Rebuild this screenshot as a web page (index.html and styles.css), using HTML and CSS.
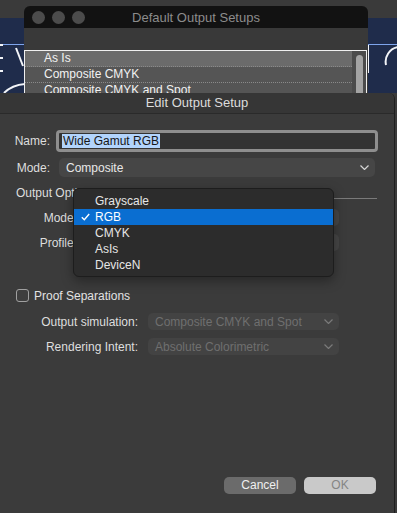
FILE: index.html
```html
<!DOCTYPE html>
<html>
<head>
<meta charset="utf-8">
<link rel="stylesheet" href="styles.css">
</head>
<body>
<div class="desk">
  <div class="wallpaper">
    <svg width="397" height="75" viewBox="0 0 397 75">
      <rect width="397" height="75" fill="#1f2c4b"/>
      <line x1="0" y1="26.5" x2="397" y2="26.5" stroke="#7ea5ec" stroke-width="1"/>
      <g stroke="#f2f4f8" stroke-width="2" fill="none">
        <line x1="0" y1="27" x2="3" y2="27"/>
        <line x1="0" y1="40" x2="3" y2="40"/>
        <line x1="0" y1="53" x2="3" y2="53"/>
        <line x1="16" y1="30" x2="23" y2="48"/>
        <path d="M4 75 Q12 67 25 66"/>
        <line x1="368" y1="27" x2="368" y2="55"/>
        <path d="M398 29 A15 15 0 0 0 386 47"/>
      </g>
    </svg>
  </div>

  <div class="back-window">
    <div class="bw-title">
      <div class="lights"><span></span><span></span><span></span></div>
      <div class="bw-title-text">Default Output Setups</div>
    </div>
    <div class="bw-toolbar"></div>
    <div class="bw-list">
      <div class="rows">
        <div class="row sel">As Is</div>
        <div class="row">Composite CMYK</div>
        <div class="row">Composite CMYK and Spot</div>
      </div>
      <div class="scroll"><div class="thumb"></div></div>
    </div>
  </div>

  <div class="dialog">
    <div class="d-title">Edit Output Setup</div>
    <div class="d-body">
      <div class="field name-row">
        <label>Name:</label>
        <div class="input"><span class="sel-text">Wide Gamut RGB</span></div>
      </div>
      <div class="field mode-row">
        <label>Mode:</label>
        <div class="popup"><span>Composite</span>
          <svg class="chev" width="9" height="5" viewBox="0 0 9 5"><path d="M0.5 0.5 L4.5 4.5 L8.5 0.5" fill="none" stroke="#d6d6d6" stroke-width="1.2"/></svg>
        </div>
      </div>
      <div class="group-head"><span>Output Options</span><div class="rule"></div></div>
      <div class="field sub first">
        <label>Mode:</label>
        <div class="popup"><span></span>
          <svg class="chev" width="9" height="5" viewBox="0 0 9 5"><path d="M0.5 0.5 L4.5 4.5 L8.5 0.5" fill="none" stroke="#d6d6d6" stroke-width="1.2"/></svg>
        </div>
      </div>
      <div class="field sub">
        <label>Profile:</label>
        <div class="popup"><span></span>
          <svg class="chev" width="9" height="5" viewBox="0 0 9 5"><path d="M0.5 0.5 L4.5 4.5 L8.5 0.5" fill="none" stroke="#d6d6d6" stroke-width="1.2"/></svg>
        </div>
      </div>
      <div class="check-row"><span class="checkbox"></span><span>Proof Separations</span></div>
      <div class="field sim first">
        <label>Output simulation:</label>
        <div class="popup disabled"><span>Composite CMYK and Spot</span>
          <svg class="chev" width="9" height="5" viewBox="0 0 9 5"><path d="M0.5 0.5 L4.5 4.5 L8.5 0.5" fill="none" stroke="#7a7a7a" stroke-width="1.2"/></svg>
        </div>
      </div>
      <div class="field sim">
        <label>Rendering Intent:</label>
        <div class="popup disabled"><span>Absolute Colorimetric</span>
          <svg class="chev" width="9" height="5" viewBox="0 0 9 5"><path d="M0.5 0.5 L4.5 4.5 L8.5 0.5" fill="none" stroke="#7a7a7a" stroke-width="1.2"/></svg>
        </div>
      </div>
      <div class="buttons">
        <div class="btn cancel">Cancel</div>
        <div class="btn ok">OK</div>
      </div>
    </div>

    <div class="menu">
      <div class="item">Grayscale</div>
      <div class="item active">
        <svg class="check" width="9" height="8" viewBox="0 0 9 8"><path d="M0.8 4.2 L3.3 6.7 L8.2 1" fill="none" stroke="#ffffff" stroke-width="1.4"/></svg>RGB</div>
      <div class="item">CMYK</div>
      <div class="item">AsIs</div>
      <div class="item">DeviceN</div>
    </div>
  </div>
</div>
</body>
</html>
```

FILE: styles.css
```css
* { box-sizing: border-box; }
html, body {
  margin: 0;
  padding: 0;
}
body {
  width: 397px;
  height: 513px;
  overflow: hidden;
  background: #2c3531;
  font-family: "Liberation Sans", Arial, sans-serif;
  font-size: 12px;
  color: #dedede;
}
.desk {
  position: relative;
  width: 397px;
  height: 513px;
  background: #3a3a3a;
}
.wallpaper {
  position: absolute;
  left: 0;
  top: 18px;
  width: 397px;
  height: 75px;
}
.wallpaper svg { display: block; }

/* back window */
.back-window {
  position: absolute;
  left: 24px;
  top: 6px;
  width: 344px;
  height: 100px;
  background: #393939;
  border-radius: 6px 6px 0 0;
  overflow: hidden;
  display: flex;
  flex-direction: column;
}
.bw-title {
  position: relative;
  flex: none;
  height: 22px;
  background: #121212;
  display: flex;
  align-items: center;
  justify-content: center;
}
.lights {
  position: absolute;
  left: 8px;
  top: 5px;
  display: flex;
  gap: 7px;
}
.lights span {
  width: 13px;
  height: 13px;
  border-radius: 50%;
  background: #4c4c4c;
}
.bw-title-text {
  font-size: 13px;
  color: #8c8c8c;
}
.bw-toolbar {
  flex: none;
  height: 22px;
}
.bw-list {
  flex: 1;
  display: flex;
  border: 1px solid #f0f0f0;
  border-bottom: none;
  margin-right: 1px;
  background: #555555;
}
.rows { flex: 1; }
.row {
  height: 16px;
  line-height: 15px;
  padding-left: 19px;
  color: #f2f2f2;
  background: #555555;
  border-bottom: 1px dotted #8a8a8a;
}
.row.sel { background: #6b6b6b; }
.scroll {
  width: 14px;
  background: #4b4b4b;
  padding: 4px 3px 0 4px;
}
.thumb {
  width: 7px;
  height: 60px;
  border-radius: 4px;
  background: #a3a3a3;
}

/* dialog */
.dialog {
  position: absolute;
  left: 0;
  top: 93px;
  width: 395px;
  height: 420px;
  background: #3b3b3b;
  border-right: 1px solid #1f1f1f;
  border-radius: 0 6px 0 0;
  display: flex;
  flex-direction: column;
}
.d-title {
  flex: none;
  height: 21px;
  line-height: 20px;
  text-align: center;
  font-size: 13px;
  color: #dcdcdc;
  background: #363636;
  border-bottom: 1px solid #2a2a2a;
  border-radius: 0 6px 0 0;
}
.d-body {
  flex: 1;
  display: flex;
  flex-direction: column;
  padding-bottom: 19px;
}
.d-body > * { flex: none; }
.field {
  display: flex;
  align-items: center;
}
.field label {
  text-align: right;
  color: #dedede;
  flex: none;
  white-space: nowrap;
}
.popup {
  display: flex;
  align-items: center;
  justify-content: space-between;
  background: #464646;
  border-radius: 5px;
  padding: 0 6px 0 7px;
  color: #e8e8e8;
}
.popup.disabled {
  color: #6f6f6f;
  background: #434343;
}
.chev { flex: none; }

.name-row { margin-top: 16px; }
.name-row label { width: 50px; }
.input {
  margin-left: 6px;
  width: 322px;
  height: 22px;
  border: 3px solid #8e8e8e;
  border-radius: 4px;
  background: #333333;
  padding-left: 3px;
  display: flex;
  align-items: center;
}
.sel-text {
  background: #b2d4fc;
  color: #161616;
  line-height: 14px;
  padding: 0 1px;
}

.mode-row { margin-top: 6px; }
.mode-row label { width: 50px; }
.mode-row .popup {
  margin-left: 9px;
  width: 316px;
  height: 19px;
}

.group-head {
  margin-top: 9px;
  height: 14px;
  display: flex;
  align-items: center;
  padding-left: 16px;
  padding-right: 17px;
  color: #dedede;
}
.group-head .rule {
  flex: 1;
  height: 1px;
  background: #7a7a7a;
  margin-left: 6px;
  margin-top: 11px;
}

.sub { margin-top: 8px; }
.sub.first { margin-top: 9px; }
.sub label { width: 77px; }
.sub .popup {
  margin-left: 3px;
  width: 259px;
  height: 17px;
}

.check-row {
  margin-top: 38px;
  padding-left: 16px;
  display: flex;
  align-items: center;
  height: 13px;
  color: #e2e2e2;
}
.checkbox {
  width: 13px;
  height: 13px;
  border: 1px solid #a0a0a0;
  border-radius: 3px;
  margin-right: 5px;
  background: #3e3e3e;
}

.sim { margin-top: 8px; }
.sim.first { margin-top: 11px; }
.sim label { width: 138px; }
.sim .popup {
  margin-left: 10px;
  width: 191px;
  height: 17px;
}

.buttons {
  margin-top: auto;
  display: flex;
  justify-content: flex-end;
  gap: 8px;
  padding-right: 18px;
}
.btn {
  width: 72px;
  height: 17px;
  line-height: 17px;
  text-align: center;
  border-radius: 5px;
}
.btn.cancel {
  background: #6b6b6b;
  color: #f0f0f0;
}
.btn.ok {
  background: #c9c9c9;
  color: #858585;
}

/* popup menu */
.menu {
  position: absolute;
  left: 73px;
  top: 95px;
  width: 261px;
  height: 89px;
  background: #2c2c2c;
  border: 1px solid #1d1d1d;
  border-radius: 6px;
  padding-top: 4px;
  box-shadow: 0 4px 12px rgba(0,0,0,0.35);
}
.item {
  position: relative;
  height: 16px;
  line-height: 16px;
  padding-left: 21px;
  color: #e6e6e6;
}
.item.active {
  background: #0a6ed1;
  color: #ffffff;
}
.check {
  position: absolute;
  left: 7px;
  top: 4px;
}
```
